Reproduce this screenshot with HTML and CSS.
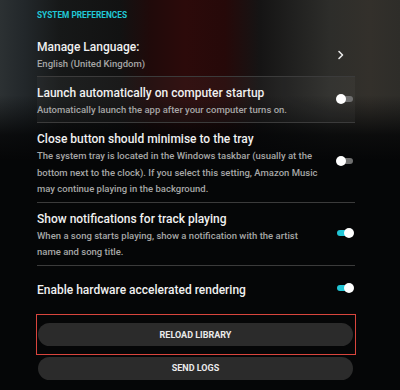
FILE: index.html
```html
<!DOCTYPE html>
<html>
<head>
<meta charset="utf-8">
<link rel="stylesheet" href="styles.css">
</head>
<body>
<div class="backdrop"></div>
<main class="panel">
  <h2 class="section-title">SYSTEM PREFERENCES</h2>

  <div class="row row-first">
    <div class="text">
      <div class="label">Manage Language:</div>
      <div class="desc">English (United Kingdom)</div>
    </div>
    <svg class="chevron" width="8" height="10" viewBox="0 0 8 10"><path d="M2 1.5 L5.5 5 L2 8.5" fill="none" stroke="#e8e8e8" stroke-width="1.6" stroke-linecap="round" stroke-linejoin="round"/></svg>
  </div>

  <div class="row row-hover">
    <div class="text">
      <div class="label">Launch automatically on computer startup</div>
      <div class="desc">Automatically launch the app after your computer turns on.</div>
    </div>
    <span class="toggle"><span class="knob"></span></span>
  </div>

  <div class="row">
    <div class="text">
      <div class="label">Close button should minimise to the tray</div>
      <div class="desc">The system tray is located in the Windows taskbar (usually at the bottom next to the clock). If you select this setting, Amazon Music may continue playing in the background.</div>
    </div>
    <span class="toggle"><span class="knob"></span></span>
  </div>

  <div class="row">
    <div class="text">
      <div class="label">Show notifications for track playing</div>
      <div class="desc">When a song starts playing, show a notification with the artist name and song title.</div>
    </div>
    <span class="toggle on"><span class="knob"></span></span>
  </div>

  <div class="row row-last">
    <div class="text">
      <div class="label">Enable hardware accelerated rendering</div>
    </div>
    <span class="toggle on"><span class="knob"></span></span>
  </div>

  <div class="highlight">
    <button class="btn">RELOAD LIBRARY</button>
  </div>
  <button class="btn btn-second">SEND LOGS</button>
</main>
</body>
</html>
```

FILE: styles.css
```css
* { box-sizing: border-box; }
html, body { margin: 0; padding: 0; }
body {
  width: 400px;
  height: 390px;
  overflow: hidden;
  background: #050607;
  font-family: Roboto, "Noto Sans", sans-serif;
  color: #ececec;
  position: relative;
}
.backdrop {
  position: absolute;
  left: 0; top: 0;
  width: 400px; height: 200px;
  background:
    linear-gradient(to bottom, rgba(5,6,7,0) 0px, rgba(5,6,7,0) 95px, rgba(5,6,7,0.85) 135px, #050607 160px),
    linear-gradient(to right, #2c3133 0px, #22272a 25px, #161818 60px, #121212 120px, #200a0a 150px, #2c0a0a 185px, #260909 225px, #151414 260px, #1f1f1e 290px, #2d2d2a 330px, #33302b 370px, #2e2d29 400px);
  z-index: 0;
}
.panel {
  position: relative;
  z-index: 1;
  margin-left: 37px;
  width: 318px;
  padding-top: 9px;
}
.section-title {
  margin: 0 0 10px;
  font-size: 8.3px;
  line-height: 12px;
  font-weight: 700;
  color: #21c8d6;
}
.row {
  display: flex;
  align-items: center;
  justify-content: space-between;
  padding: 7px 0 4px;
  border-bottom: 1px solid #3b3b3b;
}
.row-hover { background: rgba(255,255,255,0.035); }
.row-last {
  border-bottom: none;
  padding: 15px 0 0;
}
.text { width: 285px; }
.label {
  font-size: 12px;
  line-height: 18px;
  font-weight: 500;
  color: #f0f0f0;
}
.desc {
  font-size: 9.5px;
  line-height: 16.5px;
  color: #a6a6a6;
  font-weight: 500;
}
.row-first .desc, .row-hover .desc { line-height: 16px; }
.chevron { margin-right: 10px; }
.toggle {
  position: relative;
  flex: none;
  width: 16px;
  height: 6px;
  border-radius: 3px;
  background: #6f6f6f;
  margin-right: 2px;
  margin-bottom: 5px;
}
.toggle .knob {
  position: absolute;
  top: -2px;
  left: -1px;
  width: 10px;
  height: 10px;
  border-radius: 50%;
  background: #ffffff;
}
.toggle.on { background: #22c6d6; }
.toggle.on .knob { left: 7px; }
.row-last .toggle { margin-bottom: 4px; }
.highlight {
  margin-top: 15px;
  margin-left: -1px;
  width: 320px;
  border: 1.5px solid #d9453d;
  padding: 8.5px 1px 7.5px;
}
.btn {
  display: block;
  width: 315px;
  height: 23px;
  border: none;
  border-radius: 12px;
  background: #2b2b2b;
  color: #eaeaea;
  font-family: Roboto, "Noto Sans", sans-serif;
  font-size: 9px;
  font-weight: 700;
  padding: 0;
}
.btn-second { margin-top: 2px; margin-left: 1px; }
```
